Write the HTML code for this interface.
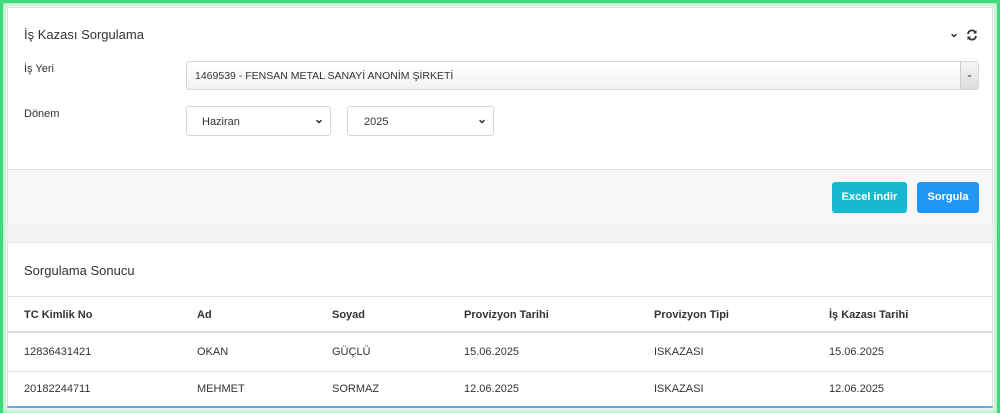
<!DOCTYPE html>
<html><head><meta charset="utf-8"><style>
*{box-sizing:border-box;margin:0;padding:0}
body{width:1000px;height:413px;background:#f3f3f3;font-family:"Liberation Sans",sans-serif;font-size:11px;color:#333;position:relative;overflow:hidden}
.glow{position:absolute;left:0;top:0;width:1000px;height:413px;border:3px solid #3fd97c;border-bottom:none;box-shadow:inset 0 0 5px 1px #8ef0b4}
.card1{position:absolute;left:7px;top:7px;width:986px;height:218px;background:#fff;border:1px solid #e4e4e4}
.foot{position:absolute;left:0;top:161px;width:100%;height:56px;background:#f7f7f7;border-top:1px solid #e2e2e2}
.t{position:absolute}
.sel{position:absolute;border:1px solid #d8d8d8;border-radius:3px;background:#fff;font-size:11px;color:#333}
.btn{position:absolute;top:174px;height:31px;color:#fff;font-size:11px;font-weight:bold;border-radius:3px;text-align:center;line-height:31px}
.card2{position:absolute;left:7px;top:242px;width:986px;height:166px;background:#fff;border:1px solid #e4e4e4;border-bottom:2px solid #5aa9e6}
.row{position:absolute;left:0;width:100%;border-top:1px solid #e2e2e2}
.row span{position:absolute;top:0}
</style></head><body>
<div class="card1">
<div class="t" style="left:16px;top:19px;font-size:13px;color:#333">İş Kazası Sorgulama</div>
<div class="t" style="left:941px;top:18px;font-size:12px;font-weight:bold">⌄</div>
<svg class="t" style="left:958px;top:21px" width="12" height="12" viewBox="0 0 12 12"><path d="M2 5 A4 4 0 0 1 9.5 3.5 M10 7 A4 4 0 0 1 2.5 8.5" stroke="#333" stroke-width="1.8" fill="none"/><path d="M10.5 1 v3.5 h-3.5z M1.5 11 v-3.5 h3.5z" fill="#333"/></svg>
<div class="t" style="left:16px;top:55px">İş Yeri</div>
<div class="sel" style="left:178px;top:53px;width:793px;height:29px;background:linear-gradient(#fff,#f2f2f2);padding:8px 8px;font-size:10.5px">1469539 - FENSAN METAL SANAYİ ANONİM ŞİRKETİ
<div style="position:absolute;right:0;top:0;width:18px;height:27px;border-left:1px solid #ccc;background:linear-gradient(#f5f5f5,#ddd);text-align:center;line-height:24px;font-size:9px">⌄</div></div>
<div class="t" style="left:16px;top:100px">Dönem</div>
<div class="sel" style="left:178px;top:98px;width:145px;height:30px;padding:9px 15px">Haziran<span style="position:absolute;right:6px;top:5px;font-weight:bold;font-size:12px">⌄</span></div>
<div class="sel" style="left:339px;top:98px;width:147px;height:30px;padding:9px 16px">2025<span style="position:absolute;right:6px;top:5px;font-weight:bold;font-size:12px">⌄</span></div>
<div class="foot"></div>
<div class="btn" style="left:824px;width:75px;background:#17b8d0">Excel indir</div>
<div class="btn" style="left:909px;width:62px;background:#2196f3">Sorgula</div>
</div>
<div class="card2">
<div class="t" style="left:16px;top:20px;font-size:13px">Sorgulama Sonucu</div>
<div class="row" style="top:53px;height:37px;border-bottom:2px solid #ddd;font-weight:bold"><span style="left:16px;top:12px">TC Kimlik No</span><span style="left:189px;top:12px">Ad</span><span style="left:324px;top:12px">Soyad</span><span style="left:456px;top:12px">Provizyon Tarihi</span><span style="left:646px;top:12px">Provizyon Tipi</span><span style="left:821px;top:12px">İş Kazası Tarihi</span></div>
<div class="row" style="top:91px;height:37px;border-top:none"><span style="left:16px;top:12px">12836431421</span><span style="left:189px;top:12px">OKAN</span><span style="left:324px;top:12px">GÜÇLÜ</span><span style="left:456px;top:12px">15.06.2025</span><span style="left:646px;top:12px">ISKAZASI</span><span style="left:821px;top:12px">15.06.2025</span></div>
<div class="row" style="top:128px;height:37px"><span style="left:16px;top:11px">20182244711</span><span style="left:189px;top:11px">MEHMET</span><span style="left:324px;top:11px">SORMAZ</span><span style="left:456px;top:11px">12.06.2025</span><span style="left:646px;top:11px">ISKAZASI</span><span style="left:821px;top:11px">12.06.2025</span></div>
</div>
<div class="glow"></div>
</body></html>
